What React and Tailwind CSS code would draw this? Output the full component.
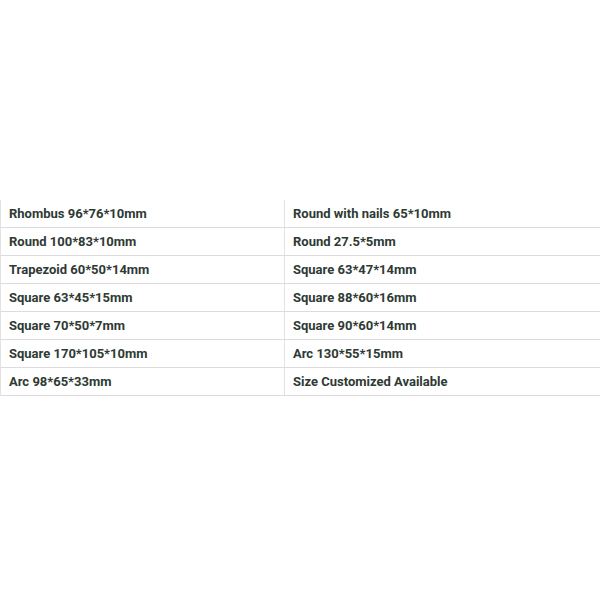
const rows = [
  ["Rhombus 96*76*10mm", "Round with nails 65*10mm"],
  ["Round 100*83*10mm", "Round 27.5*5mm"],
  ["Trapezoid 60*50*14mm", "Square 63*47*14mm"],
  ["Square 63*45*15mm", "Square 88*60*16mm"],
  ["Square 70*50*7mm", "Square 90*60*14mm"],
  ["Square 170*105*10mm", "Arc 130*55*15mm"],
  ["Arc 98*65*33mm", "Size Customized Available"],
];

export default function App() {
  return (
    <div className="w-[600px] h-[600px] bg-white font-['Roboto',sans-serif] pt-[200px]">
      <div className="border-l border-[#e2e2e2]">
        {rows.map(([a, b]) => (
          <div key={a} className="flex h-[28px] border-b border-[#dcdcdc]">
            <div className="w-[284px] border-r border-[#e2e2e2] pl-[8px] flex items-center text-[13px] font-bold text-[#2e3a33]">
              {a}
            </div>
            <div className="flex-1 pl-[8px] flex items-center text-[13px] font-bold text-[#2e3a33]">
              {b}
            </div>
          </div>
        ))}
      </div>
    </div>
  );
}
